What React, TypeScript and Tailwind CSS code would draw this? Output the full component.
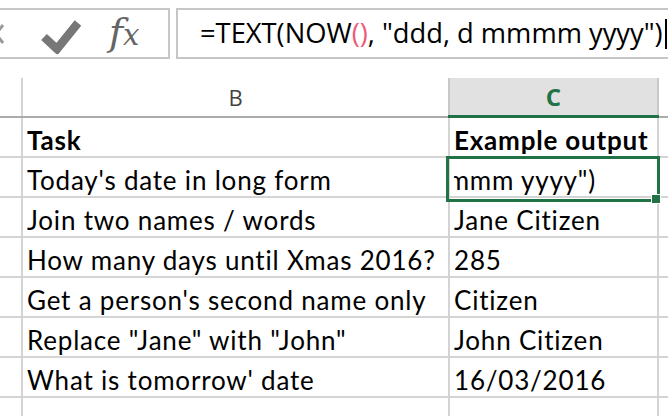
import React from 'react';

const cellFont = { fontFamily: 'Lato, "Open Sans", sans-serif', letterSpacing: '0.8px' };

const rows: [string, string][] = [
  ["Today's date in long form", ''],
  ['Join two names / words', 'Jane Citizen'],
  ['How many days until Xmas 2016?', '285'],
  ["Get a person's second name only", 'Citizen'],
  ['Replace "Jane" with "John"', 'John Citizen'],
  ["What is tomorrow' date", '16/03/2016'],
];

function FormulaBar() {
  return (
    <div className="flex h-[51px] mt-2 gap-[6px]" style={{ letterSpacing: 0 }}>
      <div className="relative w-[170px] border-y-2 border-r-2 border-[#c6c6c6]">
        <svg className="absolute left-[-14px] top-[12px]" width="20" height="24" viewBox="0 0 20 24">
          <path d="M3 3 L17 21 M17 3 L3 21" stroke="#9a9a9a" strokeWidth="3" fill="none" />
        </svg>
        <svg className="absolute left-[41px] top-[8px]" width="40" height="36" viewBox="0 0 40 36">
          <path d="M3 19 L16 31 L37 5" stroke="#777" strokeWidth="8.5" fill="none" />
        </svg>
        <span
          className="absolute left-[109px] top-[3px] text-[38px] italic text-[#656565] leading-none"
          style={{ fontFamily: '"DejaVu Serif", "Liberation Serif", serif' }}
        >
          f<span className="text-[29px]">x</span>
        </span>
      </div>
      <div className="flex-1 border-y-2 border-l-2 border-[#c6c6c6] flex items-center pl-[22px]">
        <span className="text-[27.3px] text-black whitespace-nowrap" style={{ fontFamily: '"Open Sans", sans-serif' }}>
          =TEXT(NOW<span className="text-[#ee5a78]">()</span>, "ddd, d mmmm yyyy")
        </span>
        <span className="w-[2px] h-[30px] bg-black ml-[2px]" />
      </div>
    </div>
  );
}

export default function App() {
  return (
    <div className="w-[668px] h-[416px] bg-white overflow-hidden relative" style={cellFont}>
      <FormulaBar />

      <div className="mt-[19px]">
        {/* column headers */}
        <div className="flex h-[40px] border-b-2 border-[#ababab]" style={{ letterSpacing: 0 }}>
          <div className="w-[23px] border-r-2 border-[#d4d4d4]" />
          <div className="w-[425px] flex items-center justify-center text-[22px] text-[#444]" style={{ fontFamily: '"Open Sans", sans-serif' }}>
            B
          </div>
          <div className="w-[211px] bg-[#e1e1e1] border-x-2 border-[#c8c8c8] flex items-center justify-center text-[24px] font-bold text-[#217346]" style={{ fontFamily: '"Open Sans", sans-serif' }}>
            C
          </div>
          <div className="flex-1" />
        </div>
        <div className="h-[3px] -mt-[3px] ml-[448px] w-[211px] bg-[#217346] relative" />

        {/* header row */}
        <div className="flex h-[40px] text-[26px] leading-[30px] text-black">
          <div className="w-[23px] border-r-2 border-b-2 border-[#d4d4d4]" />
          <div className="w-[427px] border-r-2 border-b-2 border-[#d4d4d4] pl-[4px] flex items-end pb-[1px] font-bold">Task</div>
          <div className="w-[209px] border-r-2 border-b-2 border-[#d4d4d4] pl-[4px] flex items-end pb-[1px] font-bold whitespace-nowrap overflow-hidden">Example output</div>
          <div className="flex-1 border-b-2 border-[#d4d4d4]" />
        </div>

        {rows.map(([task, out], i) => (
          <div key={i} className="flex h-[40px] text-[26px] leading-[30px] text-black">
            <div className="w-[23px] border-r-2 border-b-2 border-[#d4d4d4]" />
            <div className="w-[427px] border-r-2 border-b-2 border-[#d4d4d4] pl-[4px] flex items-end pb-[1px] whitespace-nowrap overflow-hidden">{task}</div>
            <div className="w-[209px] border-r-2 border-b-2 border-[#d4d4d4] pl-[4px] flex items-end pb-[1px] whitespace-nowrap overflow-hidden">
              {i === 0 ? (
                <div className="w-[142px] overflow-hidden flex justify-end">
                  <span className="whitespace-nowrap">"ddd, d mmmm yyyy")</span>
                </div>
              ) : (
                out
              )}
            </div>
            <div className="flex-1 border-b-2 border-[#d4d4d4]" />
          </div>
        ))}

        <div className="flex h-[40px]">
          <div className="w-[23px] border-r-2 border-[#d4d4d4]" />
          <div className="w-[427px] border-r-2 border-[#d4d4d4]" />
          <div className="w-[209px] border-r-2 border-[#d4d4d4]" />
        </div>
      </div>

      {/* active cell selection */}
      <div className="absolute left-[446px] top-[156px] w-[214px] h-[46px] border-[3px] border-[#217346]" />
      <div className="absolute left-[651px] top-[194px] w-[10px] h-[10px] bg-[#217346] border border-white" />
    </div>
  );
}
